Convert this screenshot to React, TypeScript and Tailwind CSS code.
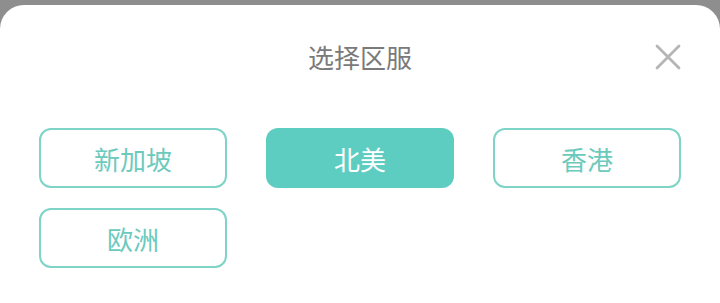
import React from 'react';

const regions = ['新加坡', '北美', '香港', '欧洲'];

export default function App() {
  const selected = '北美';

  return (
    <div
      className="h-[303px] w-[720px] overflow-hidden bg-[#8e8e8e] pt-[5px]"
      style={{ fontFamily: '"Noto Sans CJK SC", "Noto Sans", sans-serif' }}
    >
      <div className="h-full rounded-t-[24px] bg-white pt-[36px]">
        {/* Header */}
        <div className="relative flex h-8 items-center justify-center">
          <h2 className="text-[26px] leading-8 text-[#7a7a7a]">选择区服</h2>
          <button className="absolute right-[39px] top-[3px] h-[26px] w-[26px]" title="关闭">
            <svg className="h-[26px] w-[26px]" viewBox="0 0 26 26" fill="none" stroke="#b5b5b5" strokeWidth="2.8" strokeLinecap="round">
              <path d="M2 2L24 24M24 2L2 24" />
            </svg>
          </button>
        </div>

        {/* Region grid */}
        <div className="mt-[55px] grid grid-cols-3 gap-x-[39px] gap-y-[20px] px-[39px]">
          {regions.map((r) =>
            r === selected ? (
              <button
                key={r}
                className="flex h-[60px] items-center justify-center rounded-[12px] bg-[#5ecdc1] text-[26px] text-white"
              >
                {r}
              </button>
            ) : (
              <button
                key={r}
                className="flex h-[60px] items-center justify-center rounded-[12px] border-2 border-[#7fd4c8] bg-white text-[26px] text-[#6ccabd]"
              >
                {r}
              </button>
            )
          )}
        </div>
      </div>
    </div>
  );
}
